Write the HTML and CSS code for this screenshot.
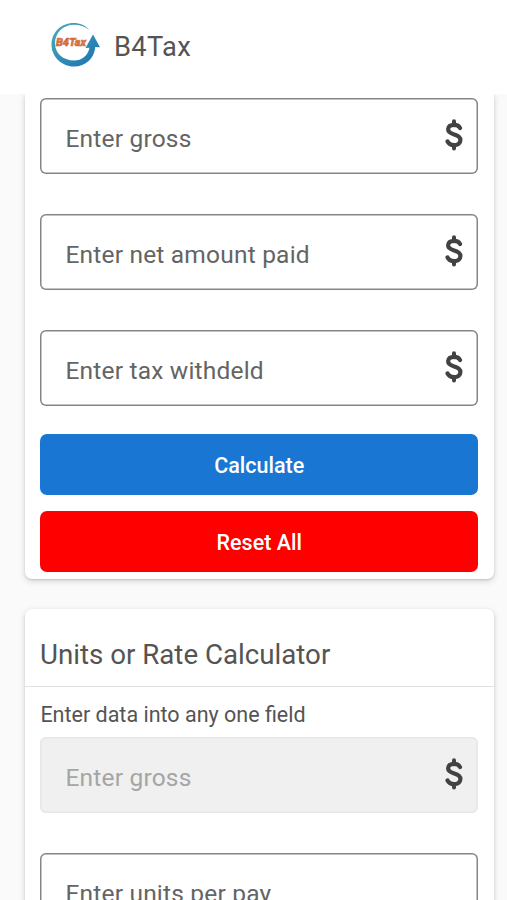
FILE: index.html
```html
<!DOCTYPE html>
<html lang="en">
<head>
<meta charset="utf-8">
<title>B4Tax</title>
<link rel="stylesheet" href="styles.css">
</head>
<body>
<svg width="0" height="0" class="defs">
  <symbol id="dollar" viewBox="0 0 18 32">
    <path d="M9 2.200v4M9 26v3.400" stroke-width="4" stroke-linecap="round"/>
    <path d="M15 9C14 6.700 12 5.800 9.100 5.800c-3.800 0-6 1.800-6 4.500 0 3.200 3 4.200 6.100 5.100 3.400 1 6.200 2.200 6.200 5.500s-2.700 5.200-6.300 5.200c-3.300 0-5.500-1.200-6.600-3.700" stroke-width="4.200" stroke-linecap="round"/>
  </symbol>
</svg>
<header class="bar">
  <svg class="logo" viewBox="0 0 50 46">
    <defs>
      <linearGradient id="ring" x1="0" y1="0" x2="1" y2="1">
        <stop offset="0" stop-color="#49aebd"/>
        <stop offset="1" stop-color="#1a70ae"/>
      </linearGradient>
    </defs>
    <path fill="url(#ring)" d="M38.5 8C34.500 3.500 29 1 22.500 1 10 1 .5 10.500 .5 22.500S10.500 44.500 23 44.500c12 0 20-8 21.300-19.500l4.700.2L42 12.500 34.500 26l4-.3C37 33.500 31 38.500 23 38.500 13 38.500 4 32 4 21.500 4 10.500 12.500 2.800 22.500 2.800c6.500 0 11.500 1.700 16 5.200z"/>
    <text x="5" y="23.500" textLength="30" lengthAdjust="spacingAndGlyphs">B4Tax</text>
  </svg>
  <h1 class="title">B4Tax</h1>
</header>
<main class="content">
  <section class="card first">
    <div class="field"><span>Enter gross</span><svg class="dollar"><use href="#dollar"/></svg></div>
    <div class="field"><span>Enter net amount paid</span><svg class="dollar"><use href="#dollar"/></svg></div>
    <div class="field"><span>Enter tax withdeld</span><svg class="dollar"><use href="#dollar"/></svg></div>
    <div class="actions">
      <button class="btn calc">Calculate</button>
      <button class="btn reset">Reset All</button>
    </div>
  </section>
  <section class="card second">
    <h2 class="heading">Units or Rate Calculator</h2>
    <div class="body">
      <p class="hint">Enter data into any one field</p>
      <div class="field disabled"><span>Enter gross</span><svg class="dollar"><use href="#dollar"/></svg></div>
      <div class="field"><span>Enter units per pay</span></div>
    </div>
  </section>
</main>
</body>
</html>
```
FILE: styles.css
```css
* { box-sizing: border-box; }
body {
  margin: 0;
  height: 900px;
  overflow: hidden;
  display: flex;
  flex-direction: column;
  background: #fafafa;
  color: #545454;
  font-family: Roboto, sans-serif;
}
.defs { display: none; }
.bar {
  flex: none;
  height: 94px;
  padding: 0 0 1px 51px;
  display: flex;
  align-items: center;
  gap: 13px;
  background: #fff;
}
.logo { width: 50px; height: 46px; margin-top: -4px; }
.logo text {
  font: italic 900 10.5px Roboto, sans-serif;
  fill: #e8793f;
  stroke: #c8643c;
  stroke-width: .5;
}
.title { margin: 0; font-size: 27.300px; font-weight: 400; letter-spacing: .3px; }
.content { flex: 1; min-height: 0; overflow: hidden; padding: 0 13px 0 25px; }
.card {
  width: 468.500px;
  background: #fff;
  border-radius: 7px;
  box-shadow: 0 2px 6px rgba(0, 0, 0, .17), 0 1px 2px rgba(0, 0, 0, .1);
}
.first {
  height: 485px;
  padding: 4px 15.500px 0 15.400px;
  border-top-left-radius: 0;
  border-top-right-radius: 0;
}
.field {
  height: 76px;
  margin-bottom: 40px;
  padding: 5px 15.500px 0 25px;
  display: flex;
  align-items: center;
  justify-content: space-between;
  box-shadow: inset 0 0 0 1.500px #868686;
  border-radius: 6px;
  color: #646464;
  font-size: 24.500px;
  letter-spacing: .2px;
  white-space: nowrap;
}
.dollar {
  width: 18px;
  height: 32px;
  margin-top: -7px;
  fill: none;
  stroke: #424242;
}
.actions { margin-top: -12px; display: flex; flex-direction: column; gap: 16px; }
.btn {
  height: 61px;
  padding: 2px 0 0;
  border: 0;
  border-radius: 7px;
  color: #fff;
  font: 500 21.500px Roboto, sans-serif;
}
.calc { background: #1976d2; }
.reset { background: #f00; }
.second { height: 350px; margin-top: 30px; }
.heading {
  height: 78px;
  margin: 0;
  padding: 13px 15px 0;
  display: flex;
  align-items: center;
  border-bottom: 1px solid #e2e2e2;
  font-size: 27.700px;
  font-weight: 400;
}
.body { padding: 0 15.500px 0 15.400px; }
.hint { height: 50px; margin: 0; line-height: 55px; font-size: 21.500px; }
.disabled { background: #f0f0f0; box-shadow: inset 0 0 0 1.500px #e7e7e7; color: #a5a5a5; }
```
